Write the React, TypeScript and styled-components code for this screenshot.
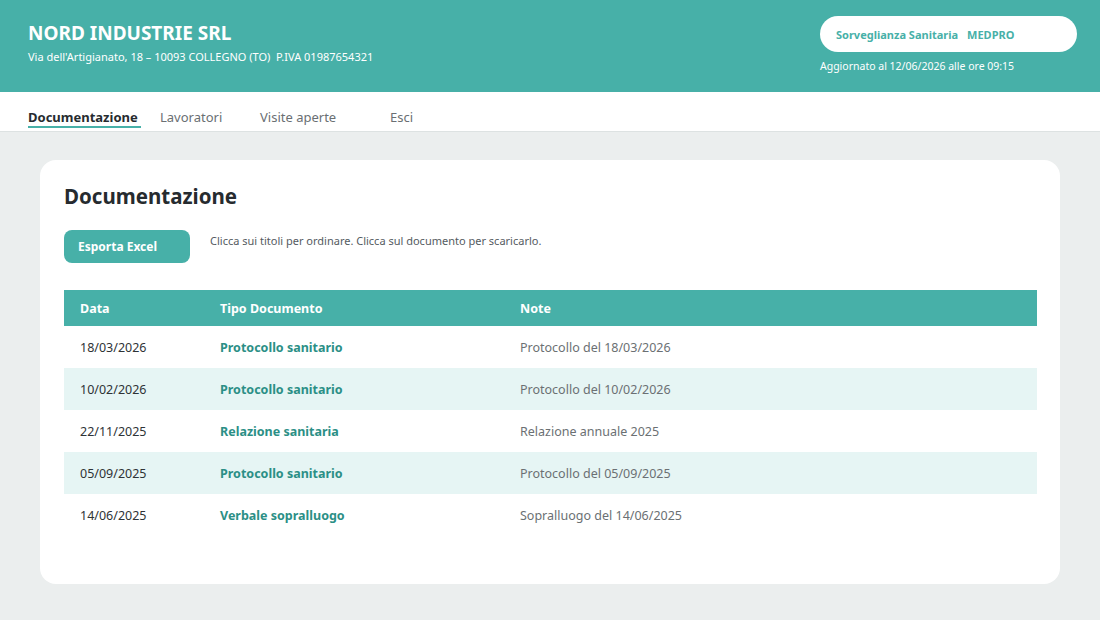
import React from 'react';
import styled, { createGlobalStyle } from 'styled-components';

const TEAL = '#47b0a8';
const TEAL_DARK = '#2b8f86';
const TEXT_DARK = '#262b2f';

const GlobalStyle = createGlobalStyle`
  html, body {
    margin: 0;
    padding: 0;
    background: #ebeeee;
    font-family: 'Noto Sans', 'Open Sans', sans-serif;
  }
`;

const Header = styled.header`
  height: 92px;
  background: ${TEAL};
  display: flex;
  justify-content: space-between;
  padding: 0 23px 0 28px;
  box-sizing: border-box;
`;

const Company = styled.div`
  padding-top: 20px;
  color: #fff;
`;

const CompanyName = styled.h1`
  margin: 0;
  font-size: 19px;
  line-height: 26px;
  font-weight: 700;
`;

const CompanyInfo = styled.div`
  margin-top: 4px;
  font-size: 11px;
  line-height: 14px;
`;

const Service = styled.div`
  padding-top: 16px;
  display: flex;
  flex-direction: column;
`;

const Pill = styled.div`
  width: 257px;
  height: 36px;
  box-sizing: border-box;
  background: #fff;
  border-radius: 18px;
  display: flex;
  align-items: center;
  gap: 9px;
  padding-left: 16px;
  color: ${TEAL};
  font-size: 11px;
  font-weight: 700;
`;

const Updated = styled.div`
  margin-top: 7px;
  color: #fff;
  font-size: 10.5px;
  line-height: 14px;
`;

const Nav = styled.nav`
  height: 40px;
  background: #fff;
  border-bottom: 1px solid #dde2e2;
  display: flex;
  align-items: stretch;
  padding-left: 28px;
  box-sizing: border-box;
`;

const NavItem = styled.a<{ $active?: boolean; $width: number }>`
  width: ${(p) => p.$width}px;
  display: flex;
  align-items: center;
  padding-top: 10px;
  box-sizing: border-box;
  font-size: 13px;
  color: ${(p) => (p.$active ? TEXT_DARK : '#6a6f73')};
  font-weight: ${(p) => (p.$active ? 700 : 400)};
  position: relative;
  cursor: pointer;

  &::after {
    content: '';
    display: ${(p) => (p.$active ? 'block' : 'none')};
    position: absolute;
    left: 0;
    bottom: 3px;
    width: 113px;
    height: 2px;
    background: ${TEAL};
  }
`;

const Main = styled.main`
  padding: 28px 40px 36px;
`;

const Card = styled.section`
  background: #fff;
  border-radius: 16px;
  padding: 22px 23px 48px 24px;
`;

const Title = styled.h2`
  margin: 0;
  font-size: 20.5px;
  line-height: 28px;
  font-weight: 700;
  color: ${TEXT_DARK};
`;

const Toolbar = styled.div`
  margin-top: 20px;
  display: flex;
  align-items: flex-start;
  gap: 20px;
`;

const Button = styled.button`
  width: 126px;
  height: 33px;
  border: none;
  border-radius: 8px;
  background: ${TEAL};
  color: #fff;
  font-family: inherit;
  font-size: 12px;
  font-weight: 700;
  text-align: left;
  padding: 0 0 0 14px;
  cursor: pointer;
`;

const Hint = styled.p`
  margin: 4px 0 0;
  font-size: 11px;
  line-height: 14px;
  color: #555b5f;
`;

const Table = styled.table`
  margin-top: 27px;
  width: 100%;
  border-collapse: collapse;
  table-layout: fixed;
`;

// column widths include the 16px side padding
const Th = styled.th<{ $width?: number }>`
  ${(p) => (p.$width ? `width: ${p.$width}px;` : '')}
  box-sizing: border-box;
  height: 36px;
  background: ${TEAL};
  color: #fff;
  text-align: left;
  padding: 0 16px;
  font-size: 12.5px;
  font-weight: 700;
  cursor: pointer;
`;

const Row = styled.tr`
  height: 42px;
  &:nth-child(even) {
    background: #e6f5f4;
  }
`;

const Td = styled.td<{ $kind?: 'date' | 'doc' | 'note' }>`
  padding: 0 16px;
  font-size: 12.5px;
  color: ${(p) => (p.$kind === 'doc' ? TEAL_DARK : p.$kind === 'note' ? '#6b7073' : '#2e3336')};
  font-weight: ${(p) => (p.$kind === 'doc' ? 700 : 400)};
  cursor: ${(p) => (p.$kind === 'doc' ? 'pointer' : 'default')};
`;

const docs = [
  { date: '18/03/2026', type: 'Protocollo sanitario', note: 'Protocollo del 18/03/2026' },
  { date: '10/02/2026', type: 'Protocollo sanitario', note: 'Protocollo del 10/02/2026' },
  { date: '22/11/2025', type: 'Relazione sanitaria', note: 'Relazione annuale 2025' },
  { date: '05/09/2025', type: 'Protocollo sanitario', note: 'Protocollo del 05/09/2025' },
  { date: '14/06/2025', type: 'Verbale sopralluogo', note: 'Sopralluogo del 14/06/2025' }
];

const App: React.FC = () => {
  return (
    <>
      <GlobalStyle />
      <Header>
        <Company>
          <CompanyName>NORD INDUSTRIE SRL</CompanyName>
          <CompanyInfo>Via dell'Artigianato, 18 – 10093 COLLEGNO (TO)&nbsp; P.IVA 01987654321</CompanyInfo>
        </Company>
        <Service>
          <Pill>
            <span>Sorveglianza Sanitaria</span>
            <span>MEDPRO</span>
          </Pill>
          <Updated>Aggiornato al 12/06/2026 alle ore 09:15</Updated>
        </Service>
      </Header>

      <Nav>
        <NavItem $active $width={132}>Documentazione</NavItem>
        <NavItem $width={100}>Lavoratori</NavItem>
        <NavItem $width={130}>Visite aperte</NavItem>
        <NavItem $width={60}>Esci</NavItem>
      </Nav>

      <Main>
        <Card>
          <Title>Documentazione</Title>
          <Toolbar>
            <Button>Esporta Excel</Button>
            <Hint>Clicca sui titoli per ordinare. Clicca sul documento per scaricarlo.</Hint>
          </Toolbar>

          <Table>
            <thead>
              <tr>
                <Th $width={140}>Data</Th>
                <Th $width={300}>Tipo Documento</Th>
                <Th>Note</Th>
              </tr>
            </thead>
            <tbody>
              {docs.map((d) => (
                <Row key={d.date}>
                  <Td $kind="date">{d.date}</Td>
                  <Td $kind="doc">{d.type}</Td>
                  <Td $kind="note">{d.note}</Td>
                </Row>
              ))}
            </tbody>
          </Table>
        </Card>
      </Main>
    </>
  );
};

export default App;
